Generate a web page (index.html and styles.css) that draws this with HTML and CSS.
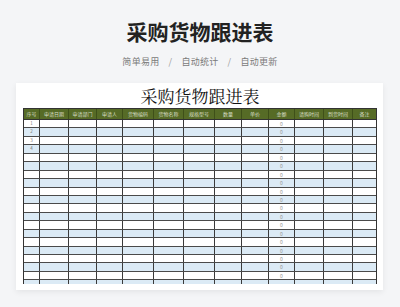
FILE: index.html
```html
<!DOCTYPE html>
<html lang="zh">
<head>
<meta charset="utf-8">
<link rel="stylesheet" href="styles.css">
</head>
<body>
<div class="page">
  <h1 class="heading">采购货物跟进表</h1>
  <div class="tags"><span>简单易用</span><span class="sep">/</span><span>自动统计</span><span class="sep">/</span><span>自动更新</span></div>
  <div class="card">
    <div class="sheet-title">采购货物跟进表</div>
    <div class="sheet">
      <div class="row head">
        <div>序号</div><div>申请日期</div><div>申请部门</div><div>申请人</div><div>货物编码</div><div>货物名称</div><div>规格型号</div><div>数量</div><div>单价</div><div>金额</div><div>请购时间</div><div>到货时间</div><div>备注</div>
      </div>
      <div id="body"></div>
    </div>
  </div>
</div>
<script>
  var b = document.getElementById('body');
  var html = '';
  for (var i = 1; i <= 20; i++) {
    html += '<div class="row ' + (i % 2 === 0 ? 'alt' : '') + '">';
    for (var c = 0; c < 13; c++) {
      var t = '';
      if (c === 0 && i <= 4) t = i;
      if (c === 9 && i <= 19) t = '0';
      html += '<div class="' + (c === 9 ? 'zero' : '') + '">' + t + '</div>';
    }
    html += '</div>';
  }
  b.innerHTML = html;
</script>
</body>
</html>
```

FILE: styles.css
```css
html, body {
  margin: 0;
  padding: 0;
  background: #f4f5f7;
  font-family: "Noto Sans CJK SC", "Noto Sans", sans-serif;
}
.page {
  width: 400px;
  height: 307px;
  overflow: hidden;
  padding-top: 17px;
  box-sizing: border-box;
}
.heading {
  margin: 0;
  text-align: center;
  font-size: 21px;
  line-height: 28px;
  font-weight: 700;
  color: #222;
}
.tags {
  margin-top: 10px;
  display: flex;
  justify-content: center;
  font-size: 9px;
  line-height: 14px;
  color: #7a7a7a;
  letter-spacing: 0.3px;
}
.tags .sep {
  margin: 0 9px;
  color: #999;
}
.card {
  margin: 14px 0 0 16px;
  width: 367px;
  height: 207px;
  background: #fff;
  box-shadow: 0 2px 6px rgba(0,0,0,0.07);
  padding: 0 6px 6px 7px;
  box-sizing: border-box;
  display: flex;
  flex-direction: column;
}
.sheet-title {
  height: 25px;
  padding-top: 1px;
  box-sizing: border-box;
  text-align: center;
  font-size: 17px;
  line-height: 24px;
  color: #111;
  font-family: "Noto Serif CJK SC", "Noto Sans CJK SC", serif;
}
.sheet {
  width: 354px;
  flex: 1;
  overflow: hidden;
  border-left: 1px solid #333;
  border-right: 1px solid #333;
  box-sizing: border-box;
}
.row {
  display: grid;
  grid-template-columns: 16px 29px 28px 26px 31px 30px 31px 27px 27px 26px 29px 29px 23px;
  height: 8.45px;
  border-bottom: 1px solid #4a4a4a;
  box-sizing: border-box;
  background: #fff;
}
.row.alt {
  background: #dbeaf5;
}
.row > div {
  border-right: 1px solid #3a3a3a;
  font-size: 4.5px;
  line-height: 7.4px;
  text-align: center;
  color: #777;
  overflow: hidden;
  white-space: nowrap;
}
.row > div:last-child {
  border-right: none;
}
.row > div.zero {
  color: #999;
  font-size: 5px;
}
.row.head {
  height: 12px;
  background: #566b26;
  border-top: 1px solid #333;
  border-bottom: 1px solid #333;
}
.row.head > div {
  border-right: 1px solid #3f5019;
  color: #d9dfc8;
  font-size: 5px;
  line-height: 10px;
}
.row.head > div:last-child {
  border-right: none;
}
```
